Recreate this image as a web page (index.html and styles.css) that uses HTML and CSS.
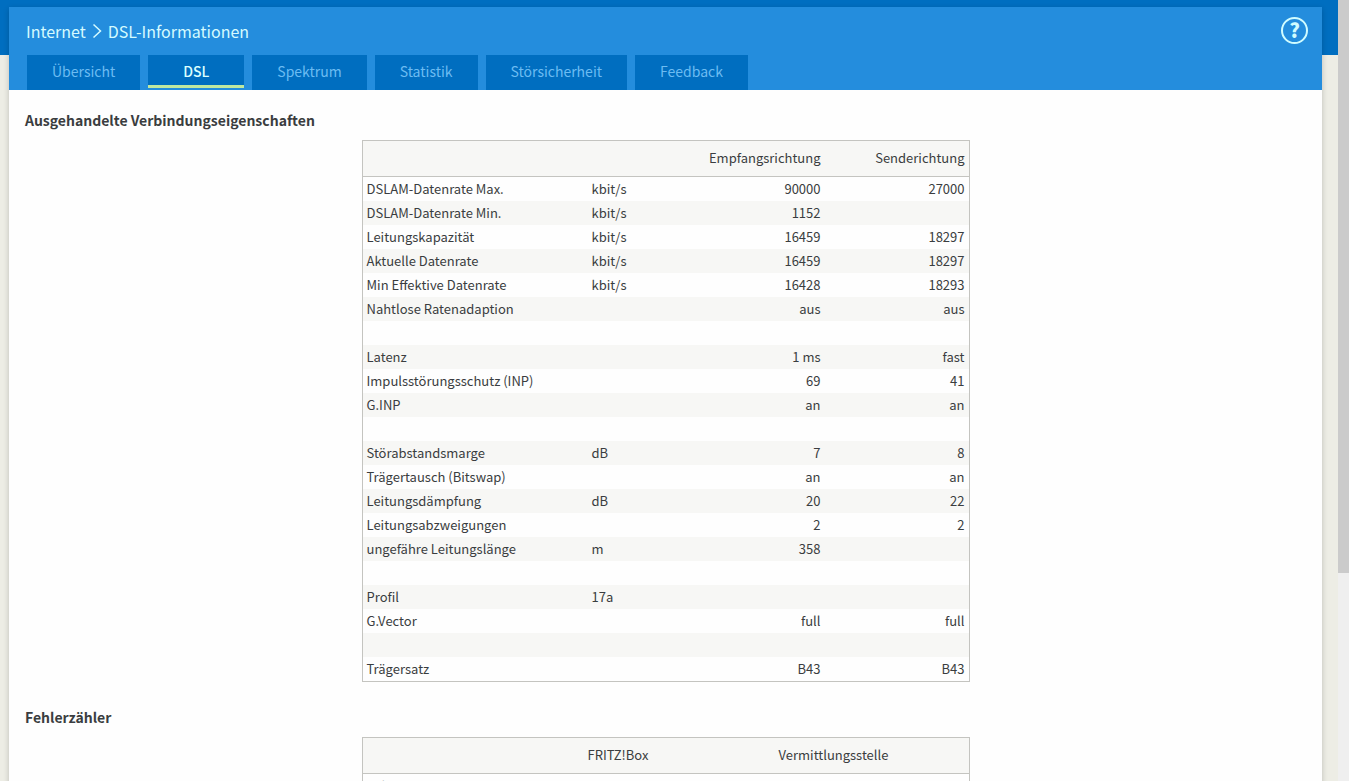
FILE: index.html
```html
<!DOCTYPE html>
<html lang="de">
<head>
<meta charset="utf-8">
<title>DSL-Informationen</title>
<link rel="stylesheet" href="styles.css">
</head>
<body>
<div class="viewport">
  <div class="backdrop">
    <main class="page">
      <header class="head">
        <div class="title-row">
          <nav class="crumbs" aria-label="Pfad">
            <a href="#">Internet</a>
            <svg class="chevron" viewBox="0 0 10 16" aria-hidden="true"><path d="M1.5 1.5 L8.5 8 L1.5 14.5"/></svg>
            <span>DSL-Informationen</span>
          </nav>
          <button class="help" type="button" aria-label="Hilfe">?</button>
        </div>
        <nav class="tabs" aria-label="Bereiche">
          <a class="tab" href="#">Übersicht</a>
          <a class="tab active" href="#" aria-current="page">DSL</a>
          <a class="tab" href="#">Spektrum</a>
          <a class="tab" href="#">Statistik</a>
          <a class="tab" href="#">Störsicherheit</a>
          <a class="tab" href="#">Feedback</a>
        </nav>
      </header>
      <div class="content">
        <h2>Ausgehandelte Verbindungseigenschaften</h2>
        <table class="grid">
          <colgroup><col class="c-name"><col class="c-unit"><col class="c-down"><col class="c-up"></colgroup>
          <thead><tr><th></th><th></th><th>Empfangsrichtung</th><th>Senderichtung</th></tr></thead>
          <tbody>
            <tr><td>DSLAM-Datenrate Max.</td><td>kbit/s</td><td>90000</td><td>27000</td></tr>
            <tr><td>DSLAM-Datenrate Min.</td><td>kbit/s</td><td>1152</td><td></td></tr>
            <tr><td>Leitungskapazität</td><td>kbit/s</td><td>16459</td><td>18297</td></tr>
            <tr><td>Aktuelle Datenrate</td><td>kbit/s</td><td>16459</td><td>18297</td></tr>
            <tr><td>Min Effektive Datenrate</td><td>kbit/s</td><td>16428</td><td>18293</td></tr>
            <tr><td>Nahtlose Ratenadaption</td><td></td><td>aus</td><td>aus</td></tr>
            <tr><td></td><td></td><td></td><td></td></tr>
            <tr><td>Latenz</td><td></td><td>1 ms</td><td>fast</td></tr>
            <tr><td>Impulsstörungsschutz (INP)</td><td></td><td>69</td><td>41</td></tr>
            <tr><td>G.INP</td><td></td><td>an</td><td>an</td></tr>
            <tr><td></td><td></td><td></td><td></td></tr>
            <tr><td>Störabstandsmarge</td><td>dB</td><td>7</td><td>8</td></tr>
            <tr><td>Trägertausch (Bitswap)</td><td></td><td>an</td><td>an</td></tr>
            <tr><td>Leitungsdämpfung</td><td>dB</td><td>20</td><td>22</td></tr>
            <tr><td>Leitungsabzweigungen</td><td></td><td>2</td><td>2</td></tr>
            <tr><td>ungefähre Leitungslänge</td><td>m</td><td>358</td><td></td></tr>
            <tr><td></td><td></td><td></td><td></td></tr>
            <tr><td>Profil</td><td>17a</td><td></td><td></td></tr>
            <tr><td>G.Vector</td><td></td><td>full</td><td>full</td></tr>
            <tr><td></td><td></td><td></td><td></td></tr>
            <tr><td>Trägersatz</td><td></td><td>B43</td><td>B43</td></tr>
          </tbody>
        </table>
        <h2>Fehlerzähler</h2>
        <table class="grid errors">
          <colgroup><col class="c-label"><col class="c-box"><col class="c-office"></colgroup>
          <thead><tr><th></th><th>FRITZ!Box</th><th>Vermittlungsstelle</th></tr></thead>
          <tbody>
            <tr><td>Sekunden mit</td><td></td><td></td></tr>
          </tbody>
        </table>
      </div>
    </main>
  </div>
  <div class="scrollbar" aria-hidden="true"><div class="thumb"></div></div>
</div>
</body>
</html>
```
FILE: styles.css
```css
* { box-sizing: border-box; }

body {
  margin: 0;
  font-family: "Noto Sans CJK SC", "Open Sans", sans-serif;
  font-size: 14px;
  line-height: 24px;
  color: #3a3d40;
}

.viewport {
  display: flex;
  height: 100vh;
  overflow: hidden;
}

.backdrop {
  flex: 1;
  padding: 7px 16px 0 9px;
  overflow: hidden;
  background: linear-gradient(#006ec0 55px, #edede5 55px);
}

.page {
  min-height: 100%;
  background: #fefefe;
  box-shadow: 0 2px 6px rgba(0, 0, 0, 0.2);
}

.head {
  padding: 0 14px 0 17px;
  background: #248ddd;
}

.title-row {
  display: flex;
  justify-content: space-between;
  align-items: center;
  height: 48px;
}

.crumbs {
  display: flex;
  align-items: center;
  gap: 6px;
  font-size: 16px;
  color: #d5fbff;
}

.crumbs a { color: inherit; text-decoration: none; }

.chevron {
  width: 10px;
  height: 16px;
  fill: none;
  stroke: currentColor;
  stroke-width: 1.5;
}

.help {
  width: 27px;
  height: 27px;
  margin-bottom: 2px;
  padding: 0;
  border: 2px solid #d0fcff;
  border-radius: 50%;
  background: none;
  color: #d0fcff;
  font: 900 20px/22px "Noto Sans CJK SC", sans-serif;
}

.tabs { display: flex; gap: 8px; padding-left: 1px; }

.tab {
  height: 35px;
  padding: 4px 25px 0;
  background: #006ec0;
  color: #6cbcf2;
  text-decoration: none;
}

.active {
  height: 33px;
  padding: 4px 35px 0;
  border-bottom: 3px solid #bfe8a0;
  color: #dcffff;
  font-weight: 500;
}

.content { padding: 18px 16px 0; }

h2 {
  margin: 0 0 8px;
  font-size: 14px;
  line-height: 24px;
  font-weight: 700;
}

.grid {
  width: 608px;
  margin: 0 auto 23px;
  border: 1px solid #c4c4c0;
  border-spacing: 0;
  table-layout: fixed;
  font-size: 13px;
}

.grid th {
  height: 36px;
  padding: 0 4px 2px;
  border-bottom: 1px solid #c4c4c0;
  background: #f7f7f5;
  font-weight: 400;
  text-align: right;
}

.grid td { height: 24px; padding: 0 4px; }
.grid tbody tr:nth-child(even) { background: #f7f7f5; }
.grid td:nth-child(n+3) { text-align: right; }

.c-name { width: 225px; }
.c-unit { width: 90px; }
.c-down { width: 147px; }
.c-up { width: 144px; }

.c-label { width: 175px; }
.c-box { width: 161px; }
.errors th { text-align: center; }

.scrollbar { flex: 0 0 11px; background: #efefef; }
.thumb { height: 73.4%; background: #cbcbcb; }
```
